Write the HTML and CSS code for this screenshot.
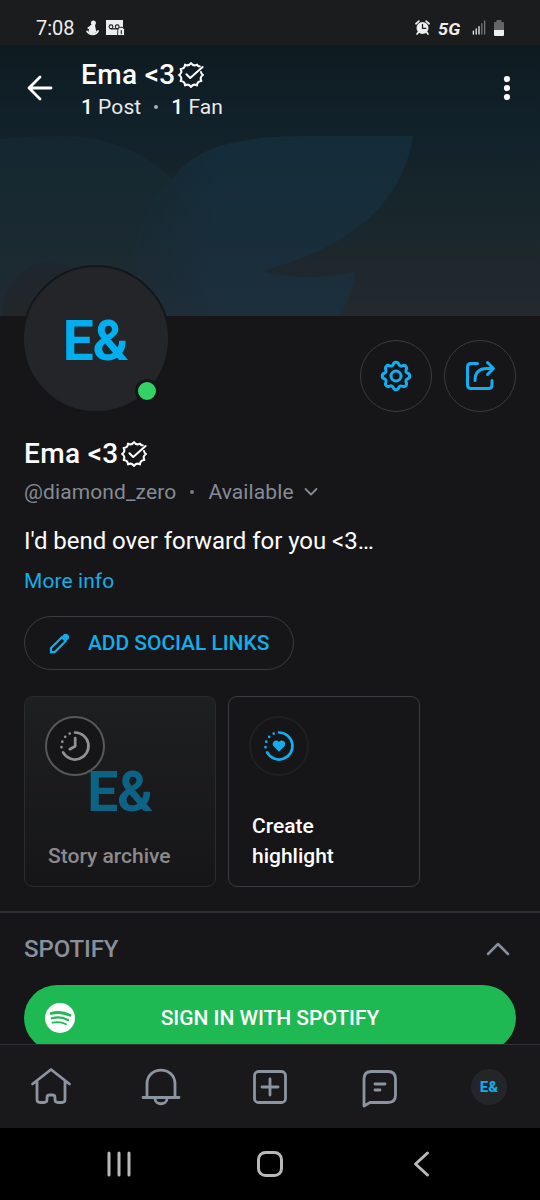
FILE: index.html
```html
<!DOCTYPE html>
<html lang="en">
<head>
<meta charset="utf-8">
<title>Ema &lt;3</title>
<link rel="stylesheet" href="styles.css">
</head>
<body>
<svg class="defs" aria-hidden="true">
  <symbol id="verified" viewBox="-14 -14 28 28">
    <path d="M8.8 -8.8Q7.5 -8 6 -10.4Q2.2 -8.3 0 -12Q-2.2 -8.3 -6 -10.4Q-6.1 -6.1 -10.4 -6Q-8.3 -2.2 -12 0Q-8.3 2.2 -10.4 6Q-6.1 6.1 -6 10.4Q-2.2 8.3 0 12Q2.2 8.3 6 10.4Q6.1 6.1 10.4 6Q8.3 2.2 12 0Q10.1 -1 10 -3M-4.6 -.8L-.8 3L11.6 -8"/>
  </symbol>
</svg>

<div class="phone">
  <header class="status">
    <span class="time">7:08</span>
    <svg class="figure" viewBox="0 0 13 16"><circle cx="7.4" cy="3" r="2.5"/><path d="M4.6 5H9L9.6 8.5L10.4 11.5L8 13.5H3.5L2.6 10.5Z"/><path class="limb" d="M5.2 6.4L2.4 8M1.2 11.5Q3 14.2 6.5 14.2Q10.6 14.1 12 11"/></svg>
    <svg class="voicemail" viewBox="0 0 19 16"><path d="M0 0H17V15H0Z"/><circle class="cut" cx="5" cy="6.8" r="1.9"/><circle class="cut" cx="11.2" cy="6.8" r="1.9"/><path class="cut" d="M5 8.9H11.2"/><path class="lock" d="M12 9.5L13.4 7.4H17L18.5 9.5V15.5H12Z"/><path class="cut" d="M15.3 10.6V13.8"/></svg>
    <span class="spacer"></span>
    <svg class="alarm" viewBox="0 0 16 16"><circle cx="8" cy="8.6" r="6.4"/><path class="ear" d="M1 4L4.2 1.2M15 4L11.8 1.2M3.5 13L2.2 15M12.5 13L13.8 15"/><path class="cut" d="M8 4.8V9H11.5"/></svg>
    <span class="net">5G</span>
    <svg class="signal" viewBox="0 0 14 16"><path d="M1 12V15M4 9.5V15M7 7V15"/><path class="dim" d="M10 4V15M13 1V15"/></svg>
    <svg class="battery" viewBox="0 0 10 16"><path class="empty" d="M0 3Q0 2 1 2H2.5V0H7.5V2H9Q10 2 10 3V10H0Z"/><path d="M0 10H10V15Q10 16 9 16H1Q0 16 0 15Z"/></svg>
  </header>

  <div class="screen">
  <section class="cover">
    <svg class="wings" viewBox="0 0 540 271" preserveAspectRatio="none">
      <defs><linearGradient id="fade" gradientUnits="userSpaceOnUse" x1="130" y1="0" x2="215" y2="0"><stop offset="0" stop-color="#163449" stop-opacity=".4"/><stop offset="1" stop-color="#163449"/></linearGradient></defs>
      <path class="back" d="M0 94Q25 91 60 91C112 91 148 110 172 134Q142 170 134 215L160 271H94A46 46 0 0 0 4 271H0Z"/>
      <path class="knoll" d="M2 271C2 238 24 218 50 218C76 218 96 240 96 271Z"/>
      <path class="front" d="M413 91H310C238 91 196 101 172 134C145 166 136 190 134 215L150 271H340C348 256 352 244 355 227C322 234 290 234 262 226C350 202 402 160 413 91Z"/>
    </svg>
    <div class="topbar">
      <svg class="back-arrow" viewBox="0 0 26 26"><path d="M13 2L2 13L13 24M2 13H24"/></svg>
      <div class="heading">
        <div class="name">Ema &lt;3<svg class="badge"><use href="#verified"/></svg></div>
        <div class="counts"><b>1</b> Post <i></i> <b>1</b> Fan</div>
      </div>
      <svg class="dots" viewBox="0 0 8 26"><circle cx="4" cy="4" r="3.1"/><circle cx="4" cy="13" r="3.1"/><circle cx="4" cy="22" r="3.1"/></svg>
    </div>
  </section>

  <main class="profile">
    <div class="identity">
      <div class="avatar">E&amp;<span class="online"></span></div>
      <div class="actions">
        <div class="round"><svg viewBox="-18 -18 36 36"><path d="M11.7 -2.7A2.8 2.8 0 0 1 11.7 2.7A2.6 2.6 0 0 0 10.2 6.4A2.8 2.8 0 0 1 6.4 10.2A2.6 2.6 0 0 0 2.7 11.7A2.8 2.8 0 0 1 -2.7 11.7A2.6 2.6 0 0 0 -6.4 10.2A2.8 2.8 0 0 1 -10.2 6.4A2.6 2.6 0 0 0 -11.7 2.7A2.8 2.8 0 0 1 -11.7 -2.7A2.6 2.6 0 0 0 -10.2 -6.4A2.8 2.8 0 0 1 -6.4 -10.2A2.6 2.6 0 0 0 -2.7 -11.7A2.8 2.8 0 0 1 2.7 -11.7A2.6 2.6 0 0 0 6.4 -10.2A2.8 2.8 0 0 1 10.2 -6.4A2.6 2.6 0 0 0 11.7 -2.7Z"/><circle r="5"/></svg></div>
        <div class="round"><svg viewBox="-18 -18 36 36"><path d="M-2.5 -12.5H-9Q-12.5 -12.5 -12.5 -9V9Q-12.5 12.5 -9 12.5H8.5Q12 12.5 12 9V4.5M-5 4.5C-5 -4 0 -7.5 7 -7.5H13M7.5 -13.5L13.5 -7.5L7.5 -1.5"/></svg></div>
      </div>
    </div>

    <h1 class="name">Ema &lt;3<svg class="badge"><use href="#verified"/></svg></h1>
    <div class="handle"><span>@diamond_zero</span><i></i><span>Available</span><svg viewBox="0 0 14 10"><path d="M1.5 2L7 7.5L12.5 2"/></svg></div>
    <p class="bio">I'd bend over forward for you &lt;3…</p>
    <a class="more">More info</a>
    <div class="social"><svg viewBox="0 0 22 22"><path d="M2 20V16L13.5 4.5L17.5 8.5L6 20Z"/><path class="solid" d="M13.6 3.4L15.6 1.4Q17.6 -.2 19.8 1.8Q22 4.2 20.4 6.2L18.4 8.2Z"/></svg><span>ADD SOCIAL LINKS</span></div>

    <div class="cards">
      <div class="card archive">
        <div class="ring"><svg viewBox="-16 -16 32 32"><path d="M0 -13.5A13.5 13.5 0 1 1 -11.9 6.4M.2 -8V.2L-5.2 3.2"/><path class="dotted" d="M-13.5 1.2h0M-12.7 -4.3h0M-9.8 -9.2h0M-5.3 -12.4h0"/></svg></div>
        <span class="initials">E&amp;</span>
        <span class="label">Story archive</span>
      </div>
      <div class="card create">
        <div class="ring"><svg viewBox="-16 -16 32 32"><path d="M0 -13.5A13.5 13.5 0 1 1 -11.9 6.4"/><path class="dotted" d="M-13.5 1.2h0M-12.7 -4.3h0M-9.8 -9.2h0M-5.3 -12.4h0"/><path class="heart" d="M0 5.8L-5.4 .2C-8.2 -3 -3.5 -8 0 -4C3.5 -8 8.2 -3 5.4 .2Z"/></svg></div>
        <span class="label">Create<br>highlight</span>
      </div>
    </div>

    <section class="spotify">
      <div class="section-head"><span>SPOTIFY</span><svg viewBox="0 0 24 16"><path d="M2 13L12 3L22 13"/></svg></div>
      <div class="signin"><svg viewBox="0 0 30 30"><circle cx="15" cy="15" r="15"/><path class="w1" d="M6 10.5Q16 7.8 25 12.3"/><path class="w2" d="M6.8 15.3Q15.5 12.8 23 17"/><path class="w3" d="M7.5 19.7Q15 17.8 21 21.3"/></svg><span>SIGN IN WITH SPOTIFY</span></div>
    </section>
  </main>
  </div>

  <nav class="tabs">
    <svg viewBox="-21 -21 42 42"><path d="M-18.5 -3L0 -17.5L18.5 -3M-14 -6V12.5Q-14 15.5 -11 15.5H-7Q-4 15.5 -4 12.5V10.5Q-4 8 -1.5 8H1.5Q4 8 4 10.5V12.5Q4 15.5 7 15.5H11Q14 15.5 14 12.5V-6"/></svg>
    <svg viewBox="-21 -21 42 42"><path d="M-18 10.5H18M-14 10V-3C-14 -21.5 14 -21.5 14 -3V10M-6 11.5C-6 18.5 6 18.5 6 11.5"/></svg>
    <svg viewBox="-21 -21 42 42"><rect x="-15.5" y="-15.5" width="31" height="31" rx="4"/><path d="M-8 0H8M0 -8V8"/></svg>
    <svg viewBox="-21 -21 42 42"><path d="M-16 19V-8Q-16 -15.5 -8.5 -15.5H8Q15.5 -15.5 15.5 -8V8Q15.5 15.5 8 15.5H-10Z"/><path d="M-5 -3H5M-5 3H0"/></svg>
    <div class="me">E&amp;</div>
  </nav>

  <footer class="system">
    <svg viewBox="-14 -14 28 28"><path d="M-10 -11V11M0 -11V11M10 -11V11"/></svg>
    <svg viewBox="-14 -14 28 28"><rect x="-11.5" y="-11.5" width="23" height="23" rx="7"/></svg>
    <svg viewBox="-14 -14 28 28"><path d="M6.5 -11L-5.5 0L6.5 11"/></svg>
  </footer>
</div>
</body>
</html>
```

FILE: styles.css
```css
* { box-sizing: border-box; }
body { margin: 0; background: #161618; color: #fefefe; font-family: Roboto, "Liberation Sans", sans-serif; }
svg { display: block; flex: none; fill: none; stroke: currentColor; stroke-linecap: round; stroke-linejoin: round; overflow: visible; }
.defs { display: none; }
.phone { width: 540px; height: 1200px; display: flex; flex-direction: column; overflow: hidden; }

.status { height: 45px; flex: none; display: flex; align-items: center; padding: 10px 36px 0; background: #1a1c1e; color: #eee; }
.status svg { fill: currentColor; stroke: none; }
.status .cut { fill: none; stroke: #1a1c1e; stroke-width: 1.1; }
.time { font-size: 20px; line-height: 24px; width: 50px; }
.figure { width: 13px; height: 16px; }
.status .limb { fill: none; stroke: currentColor; stroke-width: 1.9; }
.voicemail { width: 19px; height: 16px; margin-left: 7px; }
.voicemail .lock { stroke: #1a1c1e; stroke-width: .9; }
.spacer { flex: 1; }
.alarm { width: 15px; height: 15px; }
.status .ear { fill: none; stroke: currentColor; stroke-width: 1.8; }
.alarm .cut { stroke-width: 1.4; }
.net { font: italic 700 16.5px/18px Roboto, sans-serif; width: 23px; margin: 4px 0 0 8px; letter-spacing: .2px; transform: scaleX(1.1); transform-origin: 0 50%; }
.signal { width: 14px; height: 15px; margin-left: 11px; }
.signal path { stroke: currentColor; stroke-width: 1.4; }
.signal .dim { stroke: #777; }
.battery { width: 10px; height: 16px; margin: 0 0 0 8px; }
.battery .empty { fill: #666; }

.screen { height: 999px; flex: none; overflow: hidden; }
.cover { height: 271px; display: grid; background: linear-gradient(to bottom, #0e1a20, #11212a 28%, #17262b 58%, #23292f 100%); }
.cover > * { grid-area: 1 / 1; }
.wings { width: 540px; height: 271px; stroke: none; }
.wings .back { fill: #1b3340; opacity: .3; }
.wings .knoll { fill: #22252a; opacity: .6; }
.wings .front { fill: url(#fade); opacity: .5; }
.topbar { display: flex; height: 86px; padding: 13px 29px 0 27px; }
.back-arrow { width: 26px; height: 26px; margin-top: 17px; stroke-width: 2.8; }
.heading { flex: 1; margin-left: 28px; }
.name { display: flex; align-items: center; margin: 0; font-size: 28px; font-weight: 500; line-height: 32px; letter-spacing: .35px; }
.badge { width: 28px; height: 28px; stroke-width: 2; margin-left: 1px; }
.heading .name { padding-top: 1px; }
.counts { display: flex; align-items: center; gap: 5px; margin-top: 3px; font-size: 21px; line-height: 26px; letter-spacing: .12px; color: #e8eaec; }
.counts b { font-weight: 500; color: #fff; }
.counts i, .handle i { width: 4px; height: 4px; border-radius: 50%; background: #a9afb5; margin: 0 8px; }
.dots { width: 8px; height: 26px; margin-top: 17px; fill: #fff; stroke: none; }

.profile { padding: 0 24px; }
.identity { display: flex; justify-content: space-between; height: 96px; }
.avatar { position: relative; width: 148px; height: 148px; margin: -51px 0 0 -2px; padding: 4px 2px 0 0; display: grid; place-items: center; border: 2px solid #141619; border-radius: 50%; background: #242529; color: #00aff0; font-size: 55px; font-weight: 700; letter-spacing: -1.4px; }
.online { position: absolute; right: 9px; bottom: 8px; width: 24px; height: 24px; border: 3px solid #161618; border-radius: 50%; background: #34d164; }
.actions { display: flex; gap: 12px; padding-top: 24px; }
.round { width: 72px; height: 72px; border: 1.5px solid #3a3b3e; border-radius: 50%; display: grid; place-items: center; color: #12aef0; }
.round svg { width: 36px; height: 36px; stroke-width: 3; }
.profile > .name { margin-top: 26px; }
.handle { display: flex; align-items: center; margin-top: 9px; font-size: 21px; line-height: 26px; color: #858b95; letter-spacing: .12px; }
.handle i { margin: 0 14px; background: #777d86; }
.handle svg { width: 14px; height: 10px; margin-left: 10px; stroke-width: 1.8; }
.bio { margin: 20px 0 0; font-size: 24px; line-height: 32px; letter-spacing: -.04px; }
.more { display: block; margin-top: 11px; font-size: 21px; line-height: 26px; letter-spacing: .08px; color: #12aeea; }
.social { display: flex; align-items: center; width: 270px; height: 54px; margin-top: 22px; padding-left: 24px; gap: 17px; border: 1.5px solid #3a3b3e; border-radius: 27px; color: #12aeea; font-size: 21px; font-weight: 500; }
.social svg { width: 21px; height: 21px; stroke-width: 2.2; stroke-linejoin: miter; }
.social span { margin-left: 1px; letter-spacing: -.06px; }
.social .solid { fill: currentColor; stroke: none; }

.cards { display: flex; gap: 12px; margin-top: 26px; }
.card { width: 192px; height: 191px; display: grid; border: 1.5px solid #3a3b3e; border-radius: 9px; }
.card > * { grid-area: 1 / 1; }
.ring { width: 60px; height: 60px; margin: 19px 20px; border: 2.5px solid #1f2022; border-radius: 50%; display: grid; place-items: center; background: #161618; color: #12aef0; }
.ring svg { width: 32px; height: 32px; stroke-width: 2.7; }
.ring .heart { fill: currentColor; stroke: none; }
.archive { border-color: #2b2c2e; background: linear-gradient(#1e1f21, #161618); }
.archive .ring { border-color: #57585a; color: #929294; }
.initials { place-self: center; padding-right: 1px; font-size: 55px; font-weight: 700; letter-spacing: -1.4px; line-height: 60px; color: #0d6385; z-index: 1; }
.label { align-self: end; padding: 0 23px 15px; font-size: 21px; font-weight: 500; line-height: 30px; }
.archive .label { color: #8b8b8d; }

.spotify { margin: 24px -24px 0; padding: 0 24px; border-top: 2px solid #303134; }
.section-head { display: flex; align-items: center; justify-content: space-between; height: 72px; padding-right: 6px; font-size: 24px; font-weight: 500; color: #89909b; }
.section-head svg { width: 24px; height: 16px; stroke-width: 2.5; }
.section-head span { letter-spacing: -.1px; }
.signin { display: grid; align-items: center; height: 66px; border-radius: 33px; background: #1fb954; font-size: 21px; font-weight: 500; letter-spacing: -.04px; text-align: center; }
.signin > * { grid-area: 1 / 1; }
.signin svg { width: 30px; height: 30px; margin-left: 21px; fill: #fff; stroke: none; }
.signin svg path { fill: none; stroke: #1fb954; stroke-width: 2.2; }
.signin svg .w1 { stroke-width: 2.8; }
.signin svg .w3 { stroke-width: 1.8; }

.tabs { height: 84px; flex: none; display: flex; align-items: center; justify-content: space-between; padding: 1px 30px 0; border-top: 1.5px solid #303134; background: #19191b; color: #8b94a0; }
.tabs svg { width: 42px; height: 42px; stroke-width: 2.8; }
.me { width: 36px; height: 36px; margin: 0 3px; border-radius: 50%; background: #242529; display: grid; place-items: center; color: #12aeea; font-size: 15px; font-weight: 700; }
.system { height: 72px; flex: none; display: flex; justify-content: space-between; align-items: center; padding: 0 105px; background: #000; color: #b9b9b9; }
.system svg { width: 28px; height: 28px; stroke-width: 3; }
```
